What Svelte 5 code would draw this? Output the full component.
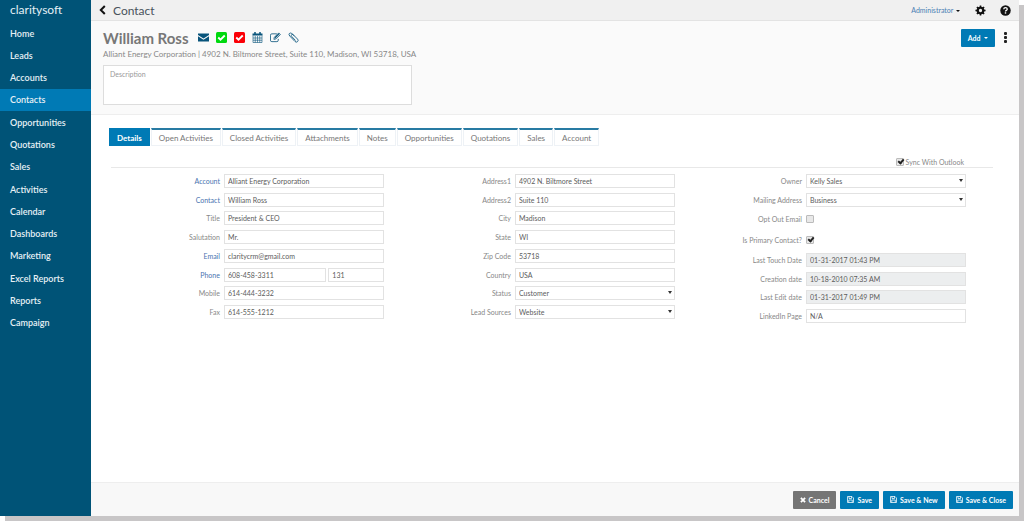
<script lang="ts">
	type Field = {
		id: string;
		label: string;
		value: string | boolean;
		kind?: 'text' | 'select' | 'check' | 'readonly' | 'phone';
		linked?: boolean;
		ext?: string;
	};

	const navItems = [
		'Home', 'Leads', 'Accounts', 'Contacts', 'Opportunities', 'Quotations', 'Sales',
		'Activities', 'Calendar', 'Dashboards', 'Marketing', 'Excel Reports', 'Reports', 'Campaign'
	];

	const tabs = [
		'Details', 'Open Activities', 'Closed Activities', 'Attachments', 'Notes',
		'Opportunities', 'Quotations', 'Sales', 'Account'
	];

	const columns: Field[][] = [
		[
			{ id: 'account', label: 'Account', value: 'Alliant Energy Corporation', linked: true },
			{ id: 'contact', label: 'Contact', value: 'William Ross', linked: true },
			{ id: 'title', label: 'Title', value: 'President & CEO' },
			{ id: 'salutation', label: 'Salutation', value: 'Mr.' },
			{ id: 'email', label: 'Email', value: 'claritycrm@gmail.com', linked: true },
			{ id: 'phone', label: 'Phone', value: '608-458-3311', kind: 'phone', linked: true, ext: '131' },
			{ id: 'mobile', label: 'Mobile', value: '614-444-3232' },
			{ id: 'fax', label: 'Fax', value: '614-555-1212' }
		],
		[
			{ id: 'address1', label: 'Address1', value: '4902 N. Biltmore Street' },
			{ id: 'address2', label: 'Address2', value: 'Suite 110' },
			{ id: 'city', label: 'City', value: 'Madison' },
			{ id: 'state', label: 'State', value: 'WI' },
			{ id: 'zip', label: 'Zip Code', value: '53718' },
			{ id: 'country', label: 'Country', value: 'USA' },
			{ id: 'status', label: 'Status', value: 'Customer', kind: 'select' },
			{ id: 'sources', label: 'Lead Sources', value: 'Website', kind: 'select' }
		],
		[
			{ id: 'owner', label: 'Owner', value: 'Kelly Sales', kind: 'select' },
			{ id: 'mailing', label: 'Mailing Address', value: 'Business', kind: 'select' },
			{ id: 'optout', label: 'Opt Out Email', value: false, kind: 'check' },
			{ id: 'primary', label: 'Is Primary Contact?', value: true, kind: 'check' },
			{ id: 'touch', label: 'Last Touch Date', value: '01-31-2017 01:43 PM', kind: 'readonly' },
			{ id: 'created', label: 'Creation date', value: '10-18-2010 07:35 AM', kind: 'readonly' },
			{ id: 'edited', label: 'Last Edit date', value: '01-31-2017 01:49 PM', kind: 'readonly' },
			{ id: 'linkedin', label: 'LinkedIn Page', value: 'N/A' }
		]
	];

	let activeTab = $state('Details');
</script>

{#snippet disk()}
	<svg class="disk" viewBox="0 0 14 14" aria-hidden="true">
		<path d="M1 1h9l3 3v9H1z M4 1v4h5V1 M3.5 13V8h7v5" fill="none" stroke="currentColor" stroke-width="1.5" />
	</svg>
{/snippet}

<div class="app">
	<aside class="sidebar">
		<a class="logo" href="#home">claritysoft</a>
		<nav>
			{#each navItems as item}
				<a href="#{item}" class:active={item === 'Contacts'}>{item}</a>
			{/each}
		</nav>
	</aside>

	<div class="page">
		<header class="topbar">
			<button class="icon-btn" aria-label="Back">
				<svg class="back" viewBox="0 0 7 10"><path d="M5.8 1L1.8 5l4 4" fill="none" stroke="currentColor" stroke-width="2" /></svg>
			</button>
			<h1>Contact</h1>
			<button class="user">Administrator <span class="caret"></span></button>
			<button class="icon-btn settings" aria-label="Settings">
				<svg class="round" viewBox="0 0 20 20">
					<g fill="currentColor">
						<path fill-rule="evenodd" d="M10 3a7 7 0 1 0 0 14a7 7 0 0 0 0-14zM10 7a3 3 0 1 1 0 6a3 3 0 0 1 0-6z" />
						{#each [0, 45, 90, 135, 180, 225, 270, 315] as angle}
							<path d="M8.2 4.5L8.6.8h2.8l.4 3.7z" transform="rotate({angle} 10 10)" />
						{/each}
					</g>
				</svg>
			</button>
			<button class="icon-btn" aria-label="Help">
				<svg class="round" viewBox="0 0 20 20">
					<circle cx="10" cy="10" r="9.5" fill="currentColor" />
					<path d="M6.8 7.7Q7 4.7 10 4.7t3.2 2.6q0 1.5-1.6 2.4T10 12" fill="none" stroke="#fff" stroke-width="2.4" />
					<path d="M8.7 13.2h2.6v2.5H8.7z" fill="#fff" />
				</svg>
			</button>
		</header>

		<section class="summary">
			<div class="heading">
				<h2>William Ross</h2>
				<div class="shortcuts">
					<button class="icon-btn" aria-label="Send email">
						<svg viewBox="0 0 22 22" fill="currentColor">
							<path d="M0 3h22v3l-11 7L0 6z" />
							<path d="M0 8.500l11 7 11-7V19H0z" />
						</svg>
					</button>
					<button class="icon-btn" aria-label="New task">
						<svg viewBox="0 0 22 22">
							<rect x="0" y="0" width="22" height="22" rx="3" fill="#00d90f" />
							<path d="M4.500 11l4.500 4.500L17.500 7" fill="none" stroke="#fff" stroke-width="3.600" />
						</svg>
					</button>
					<button class="icon-btn" aria-label="Complete task">
						<svg viewBox="0 0 22 22">
							<rect x="0" y="0" width="22" height="22" rx="3" fill="#fb0007" />
							<path d="M4.500 11l4.500 4.500L17.500 7" fill="none" stroke="#fff" stroke-width="3.600" />
						</svg>
					</button>
					<button class="icon-btn" aria-label="New appointment">
						<svg viewBox="0 0 22 22">
							<path d="M1 3h20v4H1z" fill="currentColor" />
							<path d="M6 0v5M16 0v5" stroke="currentColor" stroke-width="3" />
							<path d="M2 7v14h18V7M6.500 8v13M11 8v13M15.500 8v13M2 12h18M2 16.500h18" fill="none" stroke="currentColor" stroke-width="1.200" />
						</svg>
					</button>
					<button class="icon-btn" aria-label="New note">
						<svg viewBox="0 0 24 22" fill="none" stroke="currentColor">
							<path d="M15 3H4Q1 3 1 6v11q0 3 3 3h11q3 0 3-3v-3" stroke-width="1.800" />
							<path d="M8.500 15l1-4.500L19 1l3.500 3.500L13 14z" stroke-width="1.800" />
							<path d="M11 11.500l9-9" stroke-width="2.500" />
						</svg>
					</button>
					<button class="icon-btn" aria-label="Attach file">
						<svg viewBox="0 0 22 22" fill="none" stroke="currentColor" stroke-width="1.700">
							<path d="M12.500 7.500l-5-4.500Q4.500 1 2.700 3T3.500 8l10.500 11q2.500 2.500 5 .3t.2-5L10.500 5.500Q8.500 4 7 5.500T7.500 9l7.500 8" />
						</svg>
					</button>
				</div>
				<button class="btn add">Add <span class="caret"></span></button>
				<button class="icon-btn more" aria-label="More options">
					<svg viewBox="0 0 4 12" fill="currentColor">
						<rect width="3" height="3" rx="1" /><rect y="4" width="3" height="3" rx="1" /><rect y="8" width="3" height="3" rx="1" />
					</svg>
				</button>
			</div>
			<p class="address">Alliant Energy Corporation | 4902 N. Biltmore Street, Suite 110, Madison, WI 53718, USA</p>
			<textarea aria-label="Description" placeholder="Description"></textarea>
		</section>

		<main>
			<div class="tabs" role="tablist">
				{#each tabs as tab}
					<button role="tab" aria-selected={tab === activeTab} class:active={tab === activeTab} onclick={() => (activeTab = tab)}>{tab}</button>
				{/each}
			</div>

			<div class="sync">
				<input type="checkbox" id="sync" checked />
				<label for="sync">Sync With Outlook</label>
			</div>

			<form class="details">
				{#each columns as fields, i}
					<div class="column" class:tall={i === 2}>
						{#each fields as field}
							<div class="field">
								<label for={field.id} class:linked={field.linked}>{field.label}</label>
								{#if field.kind === 'select'}
									<div class="select">
										<select id={field.id}><option>{field.value}</option></select>
									</div>
								{:else if field.kind === 'check'}
									<input type="checkbox" id={field.id} checked={field.value === true} />
								{:else if field.kind === 'phone'}
									<div class="phone">
										<input type="text" id={field.id} value={field.value} />
										<input type="text" aria-label="Extension" value={field.ext} />
									</div>
								{:else}
									<input type="text" id={field.id} value={field.value} readonly={field.kind === 'readonly'} />
								{/if}
							</div>
						{/each}
					</div>
				{/each}
			</form>
		</main>

		<footer>
			<button class="btn cancel">
				<svg class="cross" viewBox="0 0 10 10" aria-hidden="true"><path d="M1.500 1.500l7 7M8.500 1.500l-7 7" stroke="currentColor" stroke-width="3" /></svg>
				Cancel
			</button>
			<button class="btn">{@render disk()}Save</button>
			<button class="btn">{@render disk()}Save &amp; New</button>
			<button class="btn">{@render disk()}Save &amp; Close</button>
		</footer>
	</div>
</div>

<style>
	:global(body) {
		background: #fff;
	}

	.app {
		display: flex;
		min-height: calc(100vh - 7px);
		margin: 0 5px 7px 0;
		box-shadow: 5px 5px 0 #c8c6c7;
		font-family: Lato, sans-serif;
		font-size: 7px;
		color: #666;
	}

	button,
	input,
	select,
	textarea {
		box-sizing: border-box;
		margin: 0;
		font-family: inherit;
	}

	button {
		padding: 0;
		border: 0;
		background: none;
		color: inherit;
		cursor: pointer;
	}

	svg {
		display: block;
	}

	/* Sidebar */
	.sidebar {
		flex: none;
		width: 91px;
		background: #005377;
	}

	.logo {
		display: block;
		height: 22px;
		padding-left: 10px;
		color: #e4eff5;
		font-size: 12px;
		line-height: 20px;
		text-decoration: none;
	}

	nav {
		display: grid;
		grid-auto-rows: 1fr;
		height: 312px;
	}

	nav a {
		display: flex;
		align-items: center;
		padding-left: 10px;
		color: #e6f0f5;
		font-size: 9px;
		font-weight: 600;
		text-decoration: none;
	}

	nav a.active {
		background: #007ab5;
	}

	/* Page */
	.page {
		display: flex;
		flex: 1;
		flex-direction: column;
		min-width: 0;
		background: #fff;
	}

	.topbar {
		display: flex;
		align-items: center;
		height: 20px;
		padding: 0 8px;
		border-bottom: 1px solid #e3e3e3;
		background: #f0f0f0;
		color: #111;
	}

	.back {
		width: 7px;
		height: 10px;
	}

	h1 {
		flex: 1;
		margin: 0 0 0 7px;
		color: #48525c;
		font-size: 12px;
		font-weight: 400;
	}

	.user {
		color: #4a80b4;
		font-size: 7px;
	}

	.caret {
		display: inline-block;
		margin-left: 1px;
		border: 2px solid transparent;
		border-top-color: #111;
		border-bottom: 0;
		vertical-align: middle;
	}

	.settings {
		margin: 0 14px 0 15px;
	}

	.round {
		width: 11px;
		height: 11px;
	}

	/* Summary */
	.summary {
		padding: 7px 8px 9px 12px;
		border-bottom: 1px solid #eee;
		background: #fafafa;
	}

	.heading {
		display: flex;
		align-items: center;
		height: 19px;
	}

	h2 {
		margin: 0;
		color: #777;
		font-size: 15px;
		font-weight: 700;
	}

	.shortcuts {
		display: flex;
		flex: 1;
		gap: 7px;
		margin-left: 9px;
		color: #08547b;
	}

	.shortcuts svg {
		width: 11px;
		height: 11px;
	}

	.btn {
		display: flex;
		align-items: center;
		justify-content: center;
		gap: 3px;
		height: 18px;
		padding: 0 7px;
		border-radius: 1px;
		background: #007ab5;
		color: #fff;
		font-size: 7px;
		font-weight: 700;
	}

	.add {
		width: 34px;
	}

	.add .caret {
		border-top-color: #fff;
	}

	.more {
		margin: 0 3px 0 9px;
		color: #222;
	}

	.more svg {
		width: 4px;
		height: 12px;
	}

	.address {
		margin: 2px 0 6px;
		color: #888;
		font-size: 8px;
		line-height: 10px;
	}

	textarea {
		display: block;
		width: 34%;
		height: 40px;
		padding: 4px 6px;
		border: 1px solid #ddd;
		background: #fff;
		color: #666;
		font-size: 7px;
		resize: none;
	}

	textarea::placeholder {
		color: #999;
	}

	/* Tabs */
	main {
		flex: 1;
		padding-top: 13px;
	}

	.tabs {
		display: flex;
		gap: 1px;
		padding-left: 18px;
	}

	.tabs button {
		height: 18px;
		padding: 0 7px;
		border: 1px solid #eef2f6;
		border-top: 2px solid #287ba3;
		background: #fff;
		color: #777;
		font-size: 8px;
	}

	.tabs button.active {
		border-color: #007ab5;
		background: #007ab5;
		color: #fff;
		font-weight: 700;
	}

	.sync {
		display: flex;
		align-items: center;
		justify-content: flex-end;
		gap: 2px;
		height: 11px;
		margin: 10px 26px 0 20px;
		padding-right: 29px;
		border-bottom: 1px solid #e8e8e8;
	}

	/* Form */
	.details {
		display: grid;
		grid-template-columns: repeat(3, 1fr);
		padding: 6px 53px 0 2px;
	}

	.column {
		display: flex;
		flex-direction: column;
		justify-content: space-between;
		height: 145px;
	}

	.column.tall {
		height: 149px;
	}

	.field {
		display: grid;
		grid-template-columns: 1fr 55%;
		align-items: center;
		column-gap: 4px;
		min-height: 14px;
	}

	.field:has(input[type='checkbox']) {
		min-height: 16px;
	}

	label {
		color: #888;
		font-size: 7px;
	}

	.field label {
		text-align: right;
	}

	label.linked {
		color: #4a74b0;
	}

	input[type='text'],
	select {
		width: 100%;
		min-width: 0;
		height: 14px;
		padding: 0 3px;
		border: 1px solid #e2e2e2;
		border-radius: 0;
		background: #fff;
		color: #5c5c5c;
		font-size: 7px;
		appearance: none;
	}

	input[readonly] {
		background: #eceeef;
	}

	.select {
		position: relative;
	}

	.select::after {
		content: '';
		position: absolute;
		top: 5px;
		right: 3px;
		border: 2px solid transparent;
		border-top: 3px solid #333;
		border-bottom: 0;
		pointer-events: none;
	}

	.phone {
		display: grid;
		grid-template-columns: 103fr 56fr;
		gap: 2px;
	}

	input[type='checkbox'] {
		position: relative;
		width: 8px;
		height: 8px;
		border: 1px solid #bbb;
		border-radius: 1px;
		background: #e8e8e8;
		appearance: none;
	}

	input[type='checkbox']:checked::after {
		content: '';
		position: absolute;
		top: -1px;
		left: 2px;
		width: 2px;
		height: 4px;
		border: solid #222;
		border-width: 0 2px 2px 0;
		transform: rotate(40deg);
	}

	/* Footer */
	footer {
		display: flex;
		align-items: center;
		justify-content: flex-end;
		gap: 4px;
		height: 33px;
		padding: 0 6px;
		border-top: 1px solid #eee;
		background: #f8f8f8;
	}

	.cancel {
		background: #757575;
	}

	.disk {
		width: 7px;
		height: 7px;
	}

	.cross {
		width: 6px;
		height: 6px;
	}
</style>
